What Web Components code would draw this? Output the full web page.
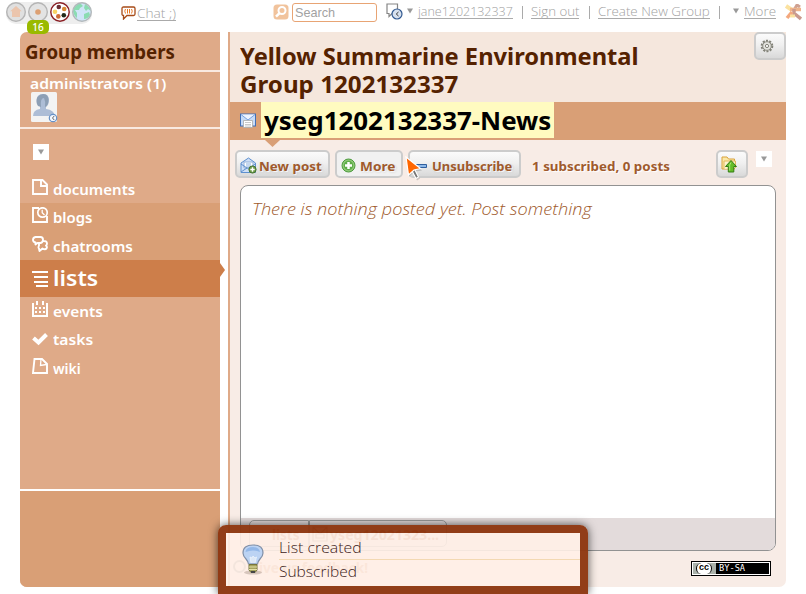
<!DOCTYPE html>
<html lang="en"><head><meta charset="utf-8"><title>Group lists</title>
<style>
html,body{margin:0;background:#fff}
body{width:806px;height:594px;overflow:hidden;font-family:"Noto Sans","Open Sans",sans-serif}
</style></head><body>
<app-page></app-page>
<script>
const ICONS={
home:['0 0 20 20','<circle cx="10" cy="10" r="9.3" fill="#e0e0e0" stroke="#b5b5b5" stroke-width="1.4"/><path d="M10 4 15.8 9.3H14V15H6V9.3H4.200Z" fill="#ebc5ad"/>'],
dot:['0 0 20 20','<circle cx="10" cy="10" r="9.3" fill="#e3e3e3" stroke="#b5b5b5" stroke-width="1.4"/><circle cx="10" cy="10" r="2.800" fill="#dca073"/>'],
groups:['0 0 20 20','<circle cx="10" cy="10" r="9.200" fill="#fff" stroke="#8a1f24" stroke-width="1.400"/><circle cx="8.800" cy="5" r="2.300" fill="#6b2e33"/><circle cx="14.200" cy="7" r="2.300" fill="#d98a35"/><circle cx="5" cy="9.700" r="2.300" fill="#f8d465"/><circle cx="8.300" cy="14.400" r="2.300" fill="#cf6b38"/><circle cx="13.800" cy="13.200" r="2.300" fill="#222b1b"/>'],
globe:['0 0 20 20','<circle cx="10" cy="10" r="9.200" fill="#d0e5f8"/><path d="M2 6Q6 1 9 2L11 4 8 6 7 8 3 8 5 11 5 16Q2 14 1 9ZM13 2Q18 5 19 9L16 7 14 9 12 6ZM12 12 17 10 18 13Q16 17 12 17Z" fill="#8bdcb2"/><circle cx="10" cy="10" r="9.300" fill="none" stroke="#b2b8bb" stroke-width="1.400"/>'],
chat:['0 0 15 14','<path d="M2.500 1H12.500Q14 1 14 2.500V8Q14 9.500 12.500 9.500H6L2.500 13V9.500Q1 9.500 1 8V2.500Q1 1 2.500 1Z" fill="#fff" stroke="#a74b18" stroke-width="1.300"/><path d="M4.500 3Q3 5 4.500 7.500M10.500 3Q12 5 10.500 7.500M6.500 3V7.500M8.500 3V7.500" fill="none" stroke="#e97825"/>'],
search:['0 0 16 16','<rect x=".5" y=".5" width="15" height="15" rx="3.500" fill="#f1c39c"/><circle cx="9" cy="6.500" r="3.500" fill="none" stroke="#fff" stroke-width="2"/><path d="M6.300 9.300 3 12.700" stroke="#fff" stroke-width="2.500"/>'],
status:['0 0 17 17','<path d="M1 1H11.500V10.500H6L3 13.500V10.500H1Z" fill="#fff" stroke="#858585" stroke-width="1.200"/><circle cx="11" cy="11" r="5" fill="#d7e1ef" stroke="#325a91" stroke-width="1.200"/><path d="M12.500 9 10.300 11 12.500 13" fill="none" stroke="#333"/>'],
tri:['0 0 6 6','<path d="M0 .5H6L3 5.500Z" fill="#999"/>'],
star:['0 0 17 17','<path d="M1 2 7 6" stroke="#fbe2a0" stroke-width="4"/><path d="M9 6 12 1 15 3" fill="none" stroke="#cfa191" stroke-width="3"/><path d="M5 5.500H16" stroke="#eeb48c" stroke-width="3.500"/><path d="M9 5 9 11M10 10 16 15" stroke="#c99a8e" stroke-width="3.500"/><path d="M2 14 7 8" stroke="#f3a87e" stroke-width="3.500"/><path d="M5 12H10" stroke="#fbe2a0" stroke-width="3"/>'],
avatar:['0 0 28 31','<rect x="0" y="0" width="26" height="30" rx="1.500" fill="#f3f3f3"/><path d="M2 24Q2 18 9 17V14Q5 12 6 9Q5 2 12 2Q18 2 18 8Q18 13 15 15V17Q23 18 24 24Z" fill="#adbdd6"/><path d="M7 14Q4 9 6.500 5Q10 1 15 2.500Q18 5 17.500 9Q17 14 14 15Q15 10 13 6Q9 6 10 15Z" fill="#8d9fb5"/><circle cx="22" cy="26" r="3.700" fill="#f4f8ff" stroke="#6791c6" stroke-width="1.200"/><path d="M23.200 24 21.500 26 23.200 28" fill="none" stroke="#666"/>'],
gear:['0 0 14 14','<circle cx="7" cy="7" r="5.300" fill="none" stroke="#828278" stroke-width="2" stroke-dasharray="2 1.330"/><circle cx="7" cy="7" r="4.300" fill="#e4e4df" stroke="#88887e"/><circle cx="7" cy="7" r="1.600" fill="#fff" stroke="#828278"/>'],
mail:['0 0 16 16','<rect x=".5" y="1" width="15" height="12" fill="#c6dbf8" stroke="#426fb5"/><path d="M1 1.500 8 7 15 1.500" fill="#eef4ff" stroke="#77a0df"/><path d="M3.500 7.500H12.500V14.500H3.500Z" fill="#fff" stroke="#aaa" stroke-width=".8"/><path d="M5 9.500H11M5 11.500H11M5 13H11" stroke="#bbb" stroke-width=".8"/>'],
ghost:['0 0 16 16','<path d="M1 1H15V15H1ZM1 1 8 8 15 1M4 8H12V12H4Z" fill="none" stroke="#8a6a5a" stroke-width="1.200"/>'],
newmail:['0 0 17 17','<path d="M1 6 8.500 1 15.500 6V15.500H1Z" fill="#cfe0f7" stroke="#5e90cf"/><path d="M4 5H13V11H4Z" fill="#fff" stroke="#90afd8"/><path d="M6 7H11M6 9H11" stroke="#8ab0e0"/><path d="M1 7 7 11 1 15M7 11H10L15 7" fill="none" stroke="#5e90cf"/><circle cx="12.500" cy="12.500" r="3.600" fill="#6d9a45" stroke="#477632"/><path d="M12.500 10.300V14.700M10.300 12.500H14.700" stroke="#fff" stroke-width="1.400"/>'],
plus:['0 0 15 15','<circle cx="7.500" cy="7.500" r="6.500" fill="#8fc977" stroke="#4b9a3c"/><circle cx="7.500" cy="7.500" r="4.700" fill="#5dac48"/><path d="M7.500 4V11M4 7.500H11" stroke="#fff" stroke-width="2.500"/>'],
minus:['0 0 15 14','<path d="M1 5.500H14.500V8.500H1Z" fill="#8db8e8" stroke="#2f5f9e"/>'],
folder:['0 0 17 17','<path d="M1 13V1H6L7.500 3H13.500V13Z" fill="#fbe8a7" stroke="#d9a33c"/><path d="M3 13V5H14.500V12" fill="#fff3cc" stroke="#e4b95d"/><path d="M10 4.500 15.500 10.500H12.800V16H7.300V10.500H4.500Z" fill="#65bd28" stroke="#337d13"/><path d="M10 6.500 8.700 9V14.500" fill="none" stroke="#aae578"/>'],
doc:['0 0 16 16','<path d="M1 1H10.500L15 5.500V15H1Z M9 1V7H15" fill="none" stroke="#fff" stroke-width="1.900"/>'],
blog:['0 0 16 16','<path d="M7 1H1V15H15V9" fill="none" stroke="#fff" stroke-width="1.900"/><circle cx="10.500" cy="5.500" r="4.700" fill="none" stroke="#fff" stroke-width="1.700"/><path d="M10.200 2.800V5.700L12.500 8" fill="none" stroke="#fff" stroke-width="1.300"/>'],
rooms:['0 0 16 16','<path d="M3.500 1H8.500Q11 1 11 3.700T8.500 7H5.500L3.500 8.500V6.500Q1 6 1 3.800T3.500 1Z M10.500 5Q15 4.500 15 7.500Q15 9 14 9.500Q15.500 11 14.500 12.500Q13 14 10.500 12.500L7.500 15 7 12.500Q6 12 7 9.500V7" fill="none" stroke="#fff" stroke-width="1.900" stroke-linejoin="round"/>'],
lists:['0 0 16 16','<path d="M0 1H16M2 6H16M2 11H16M4 15H16" stroke="#fff" stroke-width="2"/>'],
events:['0 0 16 16','<path d="M1 2V15H15V2" fill="none" stroke="#fff" stroke-width="2"/><path d="M5 0V4M11 0V4" stroke="#fff" stroke-width="2"/><path d="M3 7H13M3 11H13" stroke="#fff" stroke-width="2" stroke-dasharray="2"/>'],
tasks:['0 0 16 16','<path d="M1.500 7 6.500 11.500 14.500 3.500" fill="none" stroke="#fff" stroke-width="4"/>'],
wiki:['0 0 16 16','<path d="M2.500 1H10L15 6V15H1Z" fill="none" stroke="#fff" stroke-width="1.900"/><path d="M9 1 8.500 7.500 14.500 6.500" fill="none" stroke="#fff" stroke-width="1.300"/>'],
cursor:['0 0 18 26','<path d="M2 2 16 13 9.800 14 14 21 11 23 7.500 15.500 3 19Z" fill="#888" opacity=".4" transform="translate(1 1.500)"/><path d="M9.500 13 13.500 21 11 22.500 7 15" fill="#777" stroke="#fff" stroke-width="1.200"/><path d="M1 1 15.500 12.500 9 14 3.500 19Z" fill="#f60" stroke="#fff" stroke-width="1.200"/>'],
bulb:['0 0 22 32','<ellipse cx="11" cy="28.500" rx="9" ry="2" fill="#bcaaa0" opacity=".6"/><path d="M6.500 20Q6.500 18 4 15Q1 12 1 9Q1 1 11 1T21 9Q21 12 18 15Q15.500 18 15.500 20Z" fill="#bcd3f3" stroke="#8090a8" stroke-width="1.200"/><path d="M3.500 8Q4 3 11 3Q17 3 18 8Q11 5 3.500 8Z" fill="#94b8e8"/><path d="M9 19 8 13 10 14 11 12 13 14 14.500 13 13 19" fill="#dde8f6" stroke="#eef4fb" stroke-width=".8"/><path d="M7 20.500H15V26L13 28.500H9L7 26Z" fill="#a5a35d" stroke="#77753c"/><path d="M7 23H15M7 25.500H15" stroke="#e5e2a8"/><path d="M9 28H13" stroke="#444" stroke-width="2"/>'],
};
class UiIcon extends HTMLElement{connectedCallback(){
 const [vb,body]=ICONS[this.getAttribute('name')];const w=this.getAttribute('w')||vb.split(' ')[2],h=this.getAttribute('h')||vb.split(' ')[3];
 this.attachShadow({mode:'open'}).innerHTML=`<style>:host{display:inline-block;flex:none;line-height:0}svg{display:block}</style><svg width="${w}" height="${h}" viewBox="${vb}">${body}</svg>`;}}
customElements.define('ui-icon',UiIcon);
// Text condensed or widened to an exact width.
class FitText extends HTMLElement{connectedCallback(){
 const w=+this.getAttribute('w');
 this.attachShadow({mode:'open'}).innerHTML=`<style>:host{display:inline-block;flex:none;white-space:nowrap;width:${w}px}span{display:inline-block;transform-origin:0 50%}</style><span><slot></slot></span>`;
 const s=this.shadowRoot.querySelector('span');
 s.style.transform=`scaleX(${w/s.offsetWidth})`;}}
customElements.define('fit-text',FitText);
class DropButton extends HTMLElement{connectedCallback(){this.attachShadow({mode:'open'}).innerHTML=`<style>:host{display:flex;flex:none;width:16px;height:16px;background:#fff;align-items:center;justify-content:center}</style><ui-icon name="tri"></ui-icon>`;}}
customElements.define('drop-button',DropButton);
class ToolButton extends HTMLElement{connectedCallback(){this.attachShadow({mode:'open'}).innerHTML=`<style>:host{display:flex;flex:none;box-sizing:border-box;height:28px;border:2px solid #ccc;border-radius:5px;background:linear-gradient(#fbfbfb,#f0f0f0 45%,#d9d9d9);align-items:center;color:#a05a2c;font-weight:700;font-size:12.5px;line-height:24px;text-shadow:1px 1px 1px #fff,1px 1px 2px #bbb}:host([flat]){background:#f1f1f1}</style><slot></slot>`;}}
customElements.define('tool-button',ToolButton);
class TopBar extends HTMLElement{connectedCallback(){this.attachShadow({mode:'open'}).innerHTML=`<style>
:host{display:flex;height:32px;position:relative;align-items:flex-start;color:#a2a2a2;font-size:13px;font-family:"Open Sans","Noto Sans",sans-serif;font-weight:300;line-height:17px}
.orbs{display:flex;gap:2px;margin:2px 0 0 6px;background:#eee;border-radius:10px;height:22px}
.badge{position:absolute;left:27px;top:20px;width:22px;height:14px;border-radius:5px;background:#9aba00;color:#fff;font:500 10px/14px "Noto Sans",sans-serif;text-align:center}
.u{border-bottom:1px solid #aaa;height:15px;margin-top:3px}
.field{box-sizing:border-box;width:85px;height:19px;border:1.500px solid #e8a474;border-radius:3px;margin:3px 9px 0 3px;padding-left:2px;font:13.300px/17px "Liberation Sans",sans-serif}
.bar{width:1px;height:13px;background:#aaa;margin-top:6px}
</style><div class="orbs"><ui-icon name="home"></ui-icon><ui-icon name="dot"></ui-icon><ui-icon name="groups"></ui-icon><ui-icon name="globe"></ui-icon></div><div class="badge">16</div>
<ui-icon name="chat" style="margin:6px 1px 0 29px"></ui-icon><fit-text class="u" w="39" style="margin-top:5px">Chat ;)</fit-text>
<ui-icon name="search" style="margin:4px 0 0 97px"></ui-icon><div class="field"><fit-text w="40">Search</fit-text></div>
<ui-icon name="status" style="margin-top:3px"></ui-icon><ui-icon name="tri" style="margin:8px 5px 0 4px"></ui-icon><fit-text class="u" w="95">jane1202132337</fit-text>
<i class="bar" style="margin-left:9px;margin-right:8px"></i><fit-text class="u" w="48">Sign out</fit-text>
<i class="bar" style="margin-left:10px;margin-right:8px"></i><fit-text class="u" w="112">Create New Group</fit-text>
<i class="bar" style="margin-left:9px;margin-right:13px"></i><ui-icon name="tri" style="margin:8px 5px 0 0"></ui-icon><fit-text class="u" w="32">More</fit-text>
<ui-icon name="star" style="margin:4px 0 0 9px"></ui-icon>`;}}
customElements.define('top-bar',TopBar);
class NavRow extends HTMLElement{connectedCallback(){const a=n=>this.getAttribute(n);this.attachShadow({mode:'open'}).innerHTML=`<style>
:host{display:flex;box-sizing:border-box;height:${a('h')}px;padding-left:12px;color:#fff;font-weight:600;font-size:14.500px;line-height:28px;position:relative;align-items:flex-start}
:host([dim]){background:#d99f76}:host([on]){background:#cd7e4a;font-size:21px;line-height:37px}
ui-icon{margin:${a('it')}px 5px 0 0}
.tip{position:absolute;left:200px;top:3px;width:5px;height:14px;background:#cd7e4a;clip-path:polygon(0 0,100% 50%,0 100%)}
</style><ui-icon name="${a('icon')}"></ui-icon><fit-text w="${a('w')}"><slot></slot></fit-text>${this.hasAttribute('on')?'<i class="tip"></i>':''}`;}}
customElements.define('nav-row',NavRow);
class SideBar extends HTMLElement{connectedCallback(){this.attachShadow({mode:'open'}).innerHTML=`<style>
:host{display:flex;flex-direction:column;width:200px;height:555px;background:#dfaa88;border-radius:7px 0 0 7px}
.h{height:38px;border-bottom:2px solid #f9eae1;padding-left:5px;font-weight:700;font-size:19px;line-height:41px;color:#520}
.m{height:55px;border-bottom:2px solid #f9eae1;padding-left:10px;color:#fff;font-size:14.500px;font-weight:600;line-height:23px;display:flex;flex-direction:column;align-items:flex-start}
.m fit-text{height:20px}.n{height:360px;border-bottom:2px solid #fff}
.f{flex:1;background:#d99f76;border-radius:0 0 0 7px}
</style><div class="h"><fit-text w="150">Group members</fit-text></div>
<div class="m"><fit-text w="136">administrators (1)</fit-text><ui-icon name="avatar" style="margin-left:1px"></ui-icon></div>
<div class="n"><drop-button style="margin:15px 0 15px 13px"></drop-button>
<nav-row icon="doc" w="82" h="28" it="4">documents</nav-row><nav-row dim icon="blog" w="39" h="29" it="4">blogs</nav-row><nav-row dim icon="rooms" w="80" h="28" it="4">chatrooms</nav-row>
<nav-row on icon="lists" w="45" h="37" it="11">lists</nav-row><nav-row icon="events" w="50" h="28" it="4">events</nav-row><nav-row icon="tasks" w="40" h="29" it="6">tasks</nav-row><nav-row icon="wiki" w="28" h="28" it="4">wiki</nav-row></div><div class="f"></div>`;}}
customElements.define('side-bar',SideBar);
class GroupPane extends HTMLElement{connectedCallback(){this.attachShadow({mode:'open'}).innerHTML=`<style>
:host{display:flex;flex-direction:column;box-sizing:border-box;width:558px;height:555px;border-left:2px solid #dfaa88;background:#f8ece6;border-radius:0 0 7px 0}
.t{display:flex;justify-content:space-between;height:70px;background:#f5e7dd}
.names{padding:11px 0 0 10px;display:flex;flex-direction:column;font-weight:700;font-size:22.500px;line-height:28px;color:#520}
.bar{height:38px;background:#d99f76;display:flex;position:relative;align-items:flex-start}
.hl{height:36px;width:290px;padding-left:3px;background:#fffbc0;color:#000;font-weight:700;font-size:25px;line-height:37px}
.tip{position:absolute;left:35px;top:38px;width:15px;height:7px;background:#d99f76;clip-path:polygon(0 0,100% 0,50% 100%)}
.tools{height:45px;display:flex;align-items:flex-start;padding:10px 0 0 5px;box-sizing:border-box;gap:5px}
.count{margin:3px 41px 0 6px;color:#a05a2c;font-size:12.500px;font-weight:700;line-height:28px;text-shadow:1px 1px 1px #fff}
.box{box-sizing:border-box;width:536px;height:366px;margin-left:10px;border:1px solid #929292;border-radius:8px;background:#fff;display:flex;flex-direction:column;overflow:hidden}
.empty{flex:1;padding:10px 0 0 11px;font:italic 300 17px/26px "Open Sans","Noto Sans",sans-serif;color:#a05a2c}
.dock{height:32px;background:#e3dbdb;display:flex;padding:2px 0 0 8px;box-sizing:border-box;color:#b0562a;font-weight:700;font-size:14px;line-height:28px}
.tab{box-sizing:border-box;height:27px;border:1px solid #999;border-radius:5px 0 0 0;width:60px;padding-left:22px}
.tab+.tab{display:flex;width:138px;padding-left:2px;border-radius:0 5px 5px 0}
.foot{display:flex;flex:1;justify-content:space-between;padding:9px 15px 0 3px;color:#d08a64;font-size:14px;font-weight:700;align-items:flex-start;line-height:16px}
.fb{display:flex;gap:3px}.ring{box-sizing:border-box;width:13px;height:13px;border:2px solid #888;border-radius:50%}
.cc{box-sizing:border-box;width:80px;height:15px;margin-top:1px;border:1px solid #000;padding:1px;background:#fff;display:flex}
.in{flex:1;background:linear-gradient(90deg,#aab2ab 23px,#000 23px);display:flex;align-items:center;color:#fff;font:8px/11px "DejaVu Sans Mono",monospace}
.c{box-sizing:border-box;width:16px;height:11px;margin:0 7px 0 3px;border:solid #000;border-width:0 1px;border-radius:6px;background:#fff;color:#000;font:bold 9px/9px "Liberation Sans",sans-serif;text-align:center}
</style><div class="t"><div class="names"><fit-text w="399">Yellow Summarine Environmental</fit-text><fit-text w="218">Group 1202132337</fit-text></div>
<tool-button style="width:32px"><ui-icon name="gear" style="margin-left:4px"></ui-icon></tool-button></div>
<div class="bar"><ui-icon name="mail" style="margin:11px 5px 0 10px"></ui-icon><div class="hl"><fit-text w="287">yseg1202132337-News</fit-text></div><i class="tip"></i></div>
<div class="tools"><tool-button style="width:95px"><ui-icon name="newmail" style="margin:3px 2px 0 3px"></ui-icon><fit-text w="63" style="margin-top:5px">New post</fit-text></tool-button>
<tool-button flat style="width:68px"><ui-icon name="plus" style="margin:2px 4px 0 4px"></ui-icon><fit-text w="35" style="margin-top:5px">More</fit-text></tool-button>
<tool-button style="width:113px"><ui-icon name="minus" style="margin:3px 5px 0 2px"></ui-icon><fit-text w="80" style="margin-top:5px">Unsubscribe</fit-text></tool-button>
<fit-text class="count" w="138">1 subscribed, 0 posts</fit-text>
<tool-button style="width:32px"><ui-icon name="folder" style="margin-left:3px"></ui-icon></tool-button><drop-button style="margin:1px 0 0 3px"></drop-button></div>
<div class="box"><div class="empty"><fit-text w="340">There is nothing posted yet. Post something</fit-text></div>
<div class="dock"><div class="tab"><fit-text w="28">lists</fit-text></div><div class="tab"><ui-icon name="ghost" style="margin:5px 2px 0 0"></ui-icon><fit-text w="109">yseg12021323...</fit-text></div></div></div>
<div class="foot"><div class="fb"><i class="ring"></i><fit-text w="119">Give us feedback!</fit-text></div><div class="cc"><div class="in"><div class="c">cc</div><fit-text w="26">BY-SA</fit-text></div></div></div>`;}}
customElements.define('group-pane',GroupPane);
class ToastBox extends HTMLElement{connectedCallback(){this.attachShadow({mode:'open'}).innerHTML=`<style>
:host{position:absolute;left:218px;top:525px;box-sizing:border-box;width:370px;height:69px;padding:8px;border-radius:8px 8px 0 0;box-shadow:0 0 10px #000a;overflow:visible}
:host::before{content:"";position:absolute;inset:0;border:8px solid #8e3610f5;border-radius:8px 8px 0 0;box-sizing:border-box}
.p{display:flex;height:53px;background:#fff0e7e6;color:#3c1a18;font:300 14.500px/24px "Open Sans","Noto Sans",sans-serif;position:relative}
.r{flex:1;display:flex;flex-direction:column}.r fit-text{height:24px}.r hr{width:301px;margin:0 0 -1px;border:0;height:1px;background:#f3d8b2}
</style><div class="p"><ui-icon name="bulb" style="margin:11px 15px 0 16px"></ui-icon><div class="r"><fit-text w="83" style="margin-top:3px;height:23px">List created</fit-text><hr><fit-text w="78" style="margin-top:1px">Subscribed</fit-text></div></div>`;}}
customElements.define('toast-box',ToastBox);
class AppPage extends HTMLElement{connectedCallback(){this.attachShadow({mode:'open'}).innerHTML=`<style>
:host{display:block;position:relative;width:806px;height:594px;overflow:hidden}.main{display:flex;gap:8px;padding-left:20px}
.cur{position:absolute;left:405px;top:156px}</style>
<top-bar></top-bar><div class="main"><side-bar></side-bar><group-pane></group-pane></div><toast-box></toast-box><ui-icon class="cur" name="cursor"></ui-icon>`;}}
customElements.define('app-page',AppPage);
</script></body></html>
